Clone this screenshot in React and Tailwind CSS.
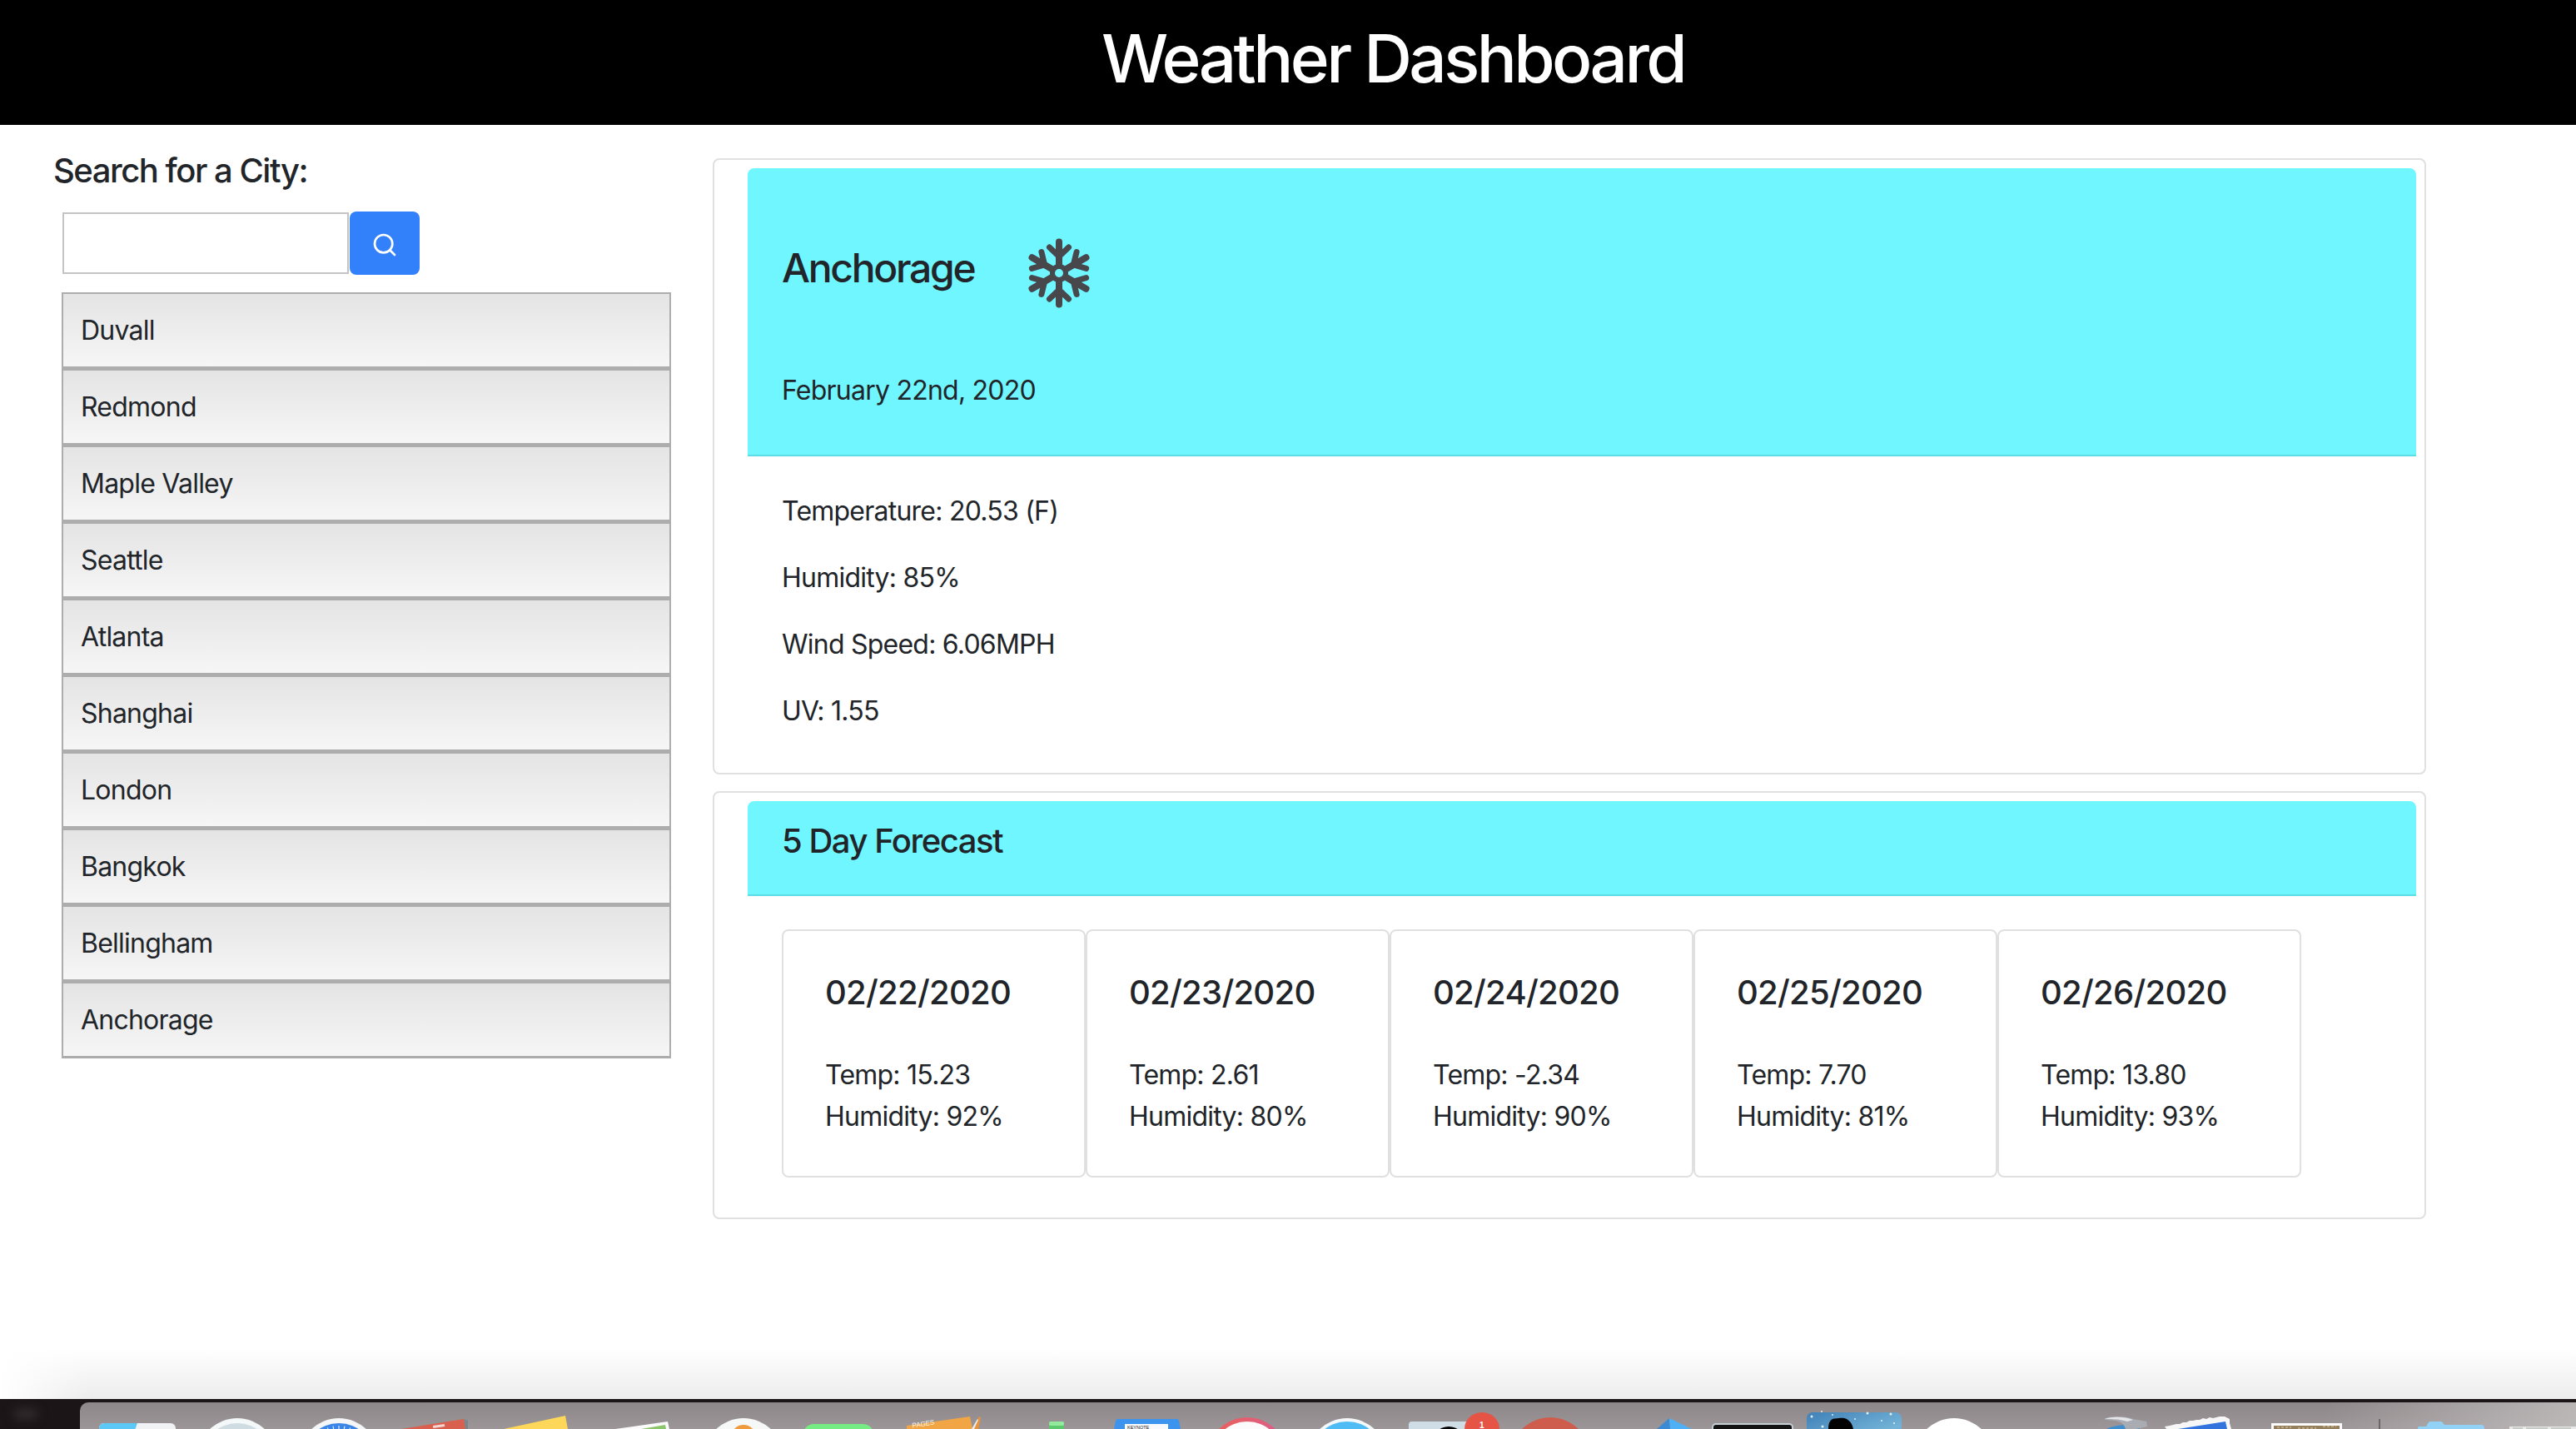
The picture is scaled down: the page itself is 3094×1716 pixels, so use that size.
import { Search } from "lucide-react";

const cities = [
  "Duvall",
  "Redmond",
  "Maple Valley",
  "Seattle",
  "Atlanta",
  "Shanghai",
  "London",
  "Bangkok",
  "Bellingham",
  "Anchorage",
];

const forecast = [
  { date: "02/22/2020", temp: "15.23", humidity: "92%" },
  { date: "02/23/2020", temp: "2.61", humidity: "80%" },
  { date: "02/24/2020", temp: "-2.34", humidity: "90%" },
  { date: "02/25/2020", temp: "7.70", humidity: "81%" },
  { date: "02/26/2020", temp: "13.80", humidity: "93%" },
];

const safariTicks = [-50, -40, -30, -20, -10, 0, 10, 20, 30, 40, 50];

const stars = [
  [2176, 21, 1.5],
  [2188, 15, 1],
  [2201, 19, 1],
  [2189, 33, 1.5],
  [2198, 30, 1],
  [2243, 17, 1.5],
  [2271, 18, 1.5],
  [2260, 26, 1],
  [2275, 29, 1],
  [2228, 24, 1],
];

function Snowflake() {
  const arms = [0, 60, 120, 180, 240, 300];
  return (
    <svg className="h-[84px] w-[78px]" viewBox="-39 -42 78 84" fill="none" stroke="#47474c" strokeLinecap="round" strokeLinejoin="round">
      <circle cx="0" cy="0" r="8" strokeWidth="6" />
      {arms.map((angle) => (
        <g key={angle} transform={`rotate(${angle})`}>
          <path d="M0 -11V-37.500" strokeWidth="8" />
          <path d="M-11.500 -31L0 -20L11.500 -31" strokeWidth="7" />
        </g>
      ))}
    </svg>
  );
}

function CityList() {
  return (
    <ul className="ml-[10px] mt-[21px] w-[732px]">
      {cities.map((city) => (
        <li
          className="flex h-[92px] items-center border-[2px] border-b-[3px] border-[#adadad] bg-gradient-to-b from-[#e4e4e4] to-[#f6f6f6] pl-[21px] text-[32px] tracking-[-0.024em] text-[#212529]"
          key={city}
        >
          {city}
        </li>
      ))}
    </ul>
  );
}

function DayCard({ day }) {
  return (
    <div className="h-[298px] w-[365px] rounded-[8px] border-[2px] border-[#e0e0e0] pl-[50px] pt-[50px] text-[#212529]">
      <h5 className="text-[40px] leading-[48px] font-medium tracking-[-0.018em]">{day.date}</h5>
      <p className="mt-[50px] text-[32px] leading-[50px] tracking-[-0.024em]">Temp: {day.temp}</p>
      <p className="text-[32px] leading-[50px] tracking-[-0.024em]">Humidity: {day.humidity}</p>
    </div>
  );
}

function DockIcons() {
  return (
    <svg className="absolute left-0 top-0 h-[36px] w-[3094px]" viewBox="0 0 3094 36">
      <defs>
        <linearGradient id="ring" x1="0" x2="1">
          <stop offset="0" stopColor="#ee5f55" />
          <stop offset="1" stopColor="#d8608c" />
        </linearGradient>
        <linearGradient id="night" x1="0" x2="1" y1="0" y2="1">
          <stop offset="0" stopColor="#3f80b8" />
          <stop offset="0.7" stopColor="#74b4d8" />
          <stop offset="1" stopColor="#4f93c4" />
        </linearGradient>
      </defs>

      {/* finder */}
      <rect x="119" y="29" width="92" height="20" rx="6" fill="#f1f2f3" />
      <path d="M119 40V35a6 6 0 0 1 6-6h40l-4 11z" fill="#5cc8f6" />

      {/* siri */}
      <circle cx="285" cy="71" r="48" fill="#f4f8f8" />
      <circle cx="285" cy="72" r="43" fill="#cfdde3" />

      {/* safari */}
      <circle cx="407" cy="71" r="48" fill="#f4f6f8" />
      <circle cx="407" cy="72" r="43" fill="#3a86e8" />
      {safariTicks.map((angle) => (
        <path d="M407 32V38" key={angle} stroke="#dbe9fb" strokeWidth="1.2" transform={`rotate(${angle} 407 72)`} />
      ))}

      {/* contacts book */}
      <path d="M557 24L562 26V36H559z" fill="#76868c" />
      <path d="M482 36L557 24L559 36z" fill="#d9604f" />
      <rect x="520" y="31" width="14" height="3" fill="#f3d6d0" transform="rotate(-9 527 32)" />

      {/* notes */}
      <path d="M605 36L679 20L682 36z" fill="#fcd75a" />

      {/* photos */}
      <path d="M739 36L802 27L804 36z" fill="#fbfbfb" />
      <path d="M770 36L799 31L800 36z" fill="#8cc56a" />

      {/* white disc */}
      <circle cx="893" cy="71" r="48" fill="#f6f8f8" />
      <circle cx="893" cy="46" r="15" fill="#ef9a3d" />

      {/* messages */}
      <rect x="964" y="30" width="86" height="30" rx="14" fill="#76ec84" />

      {/* pages */}
      <path d="M1089 32L1165 21L1168 36H1089z" fill="#f2a544" />
      <path d="M1169 36L1176 21L1178 22L1175 36z" fill="#eb9338" />
      <path d="M1167 36L1174 24L1175 25L1170 36z" fill="#e8eef5" />
      <text x="1096" y="34.500" fill="#fff7ea" fontSize="8" fontFamily="Liberation Sans, sans-serif" transform="rotate(-9 1096 34.500)">PAGES</text>

      {/* numbers */}
      <rect x="1260" y="27" width="18" height="12" rx="2" fill="#5cc96e" />
      <rect x="1260" y="27" width="18" height="5" rx="2" fill="#94ea9c" />

      {/* keynote */}
      <path d="M1338 36L1340 26a3 3 0 0 1 3-2h70a3 3 0 0 1 3 2L1418 36z" fill="#3d94ee" />
      <rect x="1351" y="30" width="52" height="10" fill="#f7f9fb" />
      <text x="1354" y="35.500" fill="#222" fontSize="5.5" fontFamily="Liberation Sans, sans-serif">KEYNOTE</text>

      {/* red ring */}
      <circle cx="1498" cy="70" r="48" fill="url(#ring)" />
      <circle cx="1498" cy="70" r="43" fill="#fbfbfb" />

      {/* blue disc */}
      <circle cx="1618" cy="71" r="48" fill="#f6f9fb" />
      <circle cx="1618" cy="71" r="44" fill="#50bcf5" />

      {/* app with badge */}
      <rect x="1692" y="27" width="90" height="30" rx="4" fill="#cfdde6" />
      <circle cx="1740" cy="53" r="20" fill="#050505" />
      <ellipse cx="1780" cy="36" rx="21" ry="20" fill="#e55445" />
      <text x="1777" y="34.500" fill="#fff" fontSize="10" fontWeight="700" fontFamily="Liberation Sans, sans-serif">1</text>

      {/* red disc */}
      <circle cx="1862" cy="70" r="48" fill="#cf5d4e" />

      {/* tent */}
      <path d="M2005 23L1990 36H2006z" fill="#3a8ad4" />
      <path d="M2005 23L2032 36H2006z" fill="#4fb0f5" />

      {/* terminal */}
      <rect x="2057" y="30" width="96" height="20" rx="4" fill="#141414" stroke="#c5d0d4" strokeWidth="2" />

      {/* night sky */}
      <rect x="2170" y="16" width="114" height="40" rx="7" fill="url(#night)" />
      {stars.map(([cx, cy, r]) => (
        <circle cx={cx} cy={cy} fill="#ffffff" fillOpacity="0.85" key={`${cx}-${cy}`} r={r} />
      ))}
      <path d="M2196 36C2196 28 2199 23 2204 23.500C2210 23 2214 22 2218 24C2223 27 2225 31 2226 36z" fill="#030303" />

      {/* white disc */}
      <circle cx="2347" cy="71" r="48" fill="#ffffff" />

      {/* xcode hammer */}
      <path d="M2530 36C2540 31 2555 30 2569 33L2570 36z" fill="#3f8fd0" />
      <path d="M2527 24C2535 20 2552 20 2562 24L2578 27L2579 33L2566 36H2553C2552 31 2548 27 2540 26C2535 25.500 2530 26 2527 24z" fill="#a9adb3" />
      <path d="M2528 24C2537 21 2552 21 2562 25L2555 27C2546 24 2536 24 2528 24z" fill="#e4e6e9" />

      {/* mail stamp */}
      <path d="M2600 33L2606 32L2610 31L2614 30L2618 30L2622 28L2626 28L2630 26L2634 26L2638 25L2642 25L2646 23L2650 24L2654 22L2658 23L2662 22L2666 21L2672 21L2678 24L2678 29L2680 36H2602z" fill="#f7f7f7" />
      <path d="M2616 36L2673 27L2675 36z" fill="#3273dd" />

      {/* photo */}
      <rect x="2728" y="29" width="85" height="20" fill="#fbfbfb" />
      <rect x="2731" y="32" width="79" height="10" fill="#94805c" />
      <path d="M2735 34H2752M2760 35H2782M2790 33H2806" stroke="#c8b58e" strokeWidth="1.500" strokeDasharray="3 2" />

      {/* separator */}
      <rect x="2857" y="24" width="2" height="12" fill="#6b6668" />

      {/* folder */}
      <path d="M2904 36V35C2904 33 2906 33 2906 33H2914L2917 28C2918 27 2919 27 2920 27H2931C2933 27 2934 28 2935 30L2936 31H2980C2983 31 2984 33 2984 36z" fill="#92d2f7" />

      {/* screenshot stack */}
      <rect x="3014" y="33" width="80" height="10" fill="#e8e8e8" />
      <path d="M3018 35H3030M3034 35H3060M3064 35H3088" stroke="#a8b0a8" strokeWidth="1" />
    </svg>
  );
}

function Dock() {
  return (
    <div className="relative h-[36px] overflow-hidden bg-[#1c1517]">
      <div className="absolute left-[16px] top-[12px] h-[12px] w-[30px] rounded-full bg-[#332c30] blur-[6px]" />
      <div className="absolute left-[96px] right-0 top-[4px] h-[40px] rounded-tl-[10px] bg-gradient-to-b from-[#8e8789] to-[#a09a9c]" />
      <div className="absolute right-0 top-[4px] h-[40px] w-[300px] bg-gradient-to-r from-transparent to-[#c4c1c1]/80" />
      <DockIcons />
    </div>
  );
}

export default function App() {
  return (
    <div className="flex h-[1716px] flex-col overflow-hidden bg-white font-['Inter',sans-serif] text-[#212529]">
      <header className="flex h-[150px] items-center justify-center bg-black pb-[10px] pl-[252px] text-[80px] font-medium tracking-[-0.045em] text-white">
        Weather Dashboard
      </header>
      <div className="flex flex-1 items-start">
        <aside className="ml-[64px] mr-[49px] w-[743px]">
          <h4 className="mt-[30px] text-[40px] leading-[50px] font-medium tracking-[-0.037em]">Search for a City:</h4>
          <div className="ml-[11px] mt-[24px] flex items-center">
            <input className="h-[74px] w-[344px] border-[2px] border-[#c4c4c4] bg-white" type="text" />
            <button className="ml-[1px] flex h-[76px] w-[84px] items-center justify-center rounded-[8px] bg-[#3380fb] pt-[4px] text-white" type="button">
              <Search size={32} strokeWidth={2} />
            </button>
          </div>
          <CityList />
        </aside>
        <main className="mt-[40px] w-[2058px]">
          <section className="h-[740px] rounded-[8px] border-[2px] border-[#e0e0e0] pl-[40px] pr-[10px] pt-[10px]">
            <div className="h-[346px] rounded-t-[8px] border-b-[2px] border-[#5cdde5] bg-[#70f6fe] pl-[41px]">
              <div className="flex items-start pt-[84px]">
                <h3 className="mt-[7px] w-[294px] text-[48px] leading-[58px] font-medium tracking-[-0.048em]">Anchorage</h3>
                <Snowflake />
              </div>
              <p className="mt-[75px] text-[32px] leading-[48px] tracking-[-0.024em]">February 22nd, 2020</p>
            </div>
            <div className="pl-[41px] pt-[42px] text-[32px] leading-[48px] tracking-[-0.024em]">
              <p>Temperature: 20.53 (F)</p>
              <p className="mt-[32px]">Humidity: 85%</p>
              <p className="mt-[32px]">Wind Speed: 6.06MPH</p>
              <p className="mt-[32px]">UV: 1.55</p>
            </div>
          </section>
          <section className="mt-[20px] h-[514px] rounded-[8px] border-[2px] border-[#e0e0e0] pl-[40px] pr-[10px] pt-[10px]">
            <div className="flex h-[114px] items-start rounded-t-[8px] border-b-[2px] border-[#5cdde5] bg-[#70f6fe] pl-[41px] pt-[24px] text-[40px] leading-[48px] font-medium tracking-[-0.037em]">
              5 Day Forecast
            </div>
            <div className="ml-[41px] mt-[40px] flex">
              {forecast.map((day) => (
                <DayCard day={day} key={day.date} />
              ))}
            </div>
          </section>
        </main>
      </div>
      <div className="relative h-[60px] bg-gradient-to-b from-white to-[#ececec]">
        <div className="absolute bottom-0 left-0 top-0 w-[110px] bg-gradient-to-r from-white to-transparent" />
      </div>
      <Dock />
    </div>
  );
}
